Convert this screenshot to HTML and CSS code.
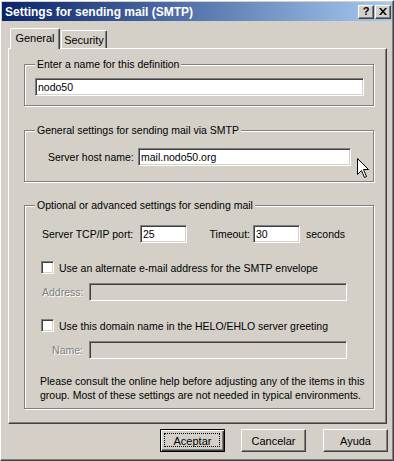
FILE: index.html
```html
<!DOCTYPE html>
<html lang="en">
<head>
  <meta charset="UTF-8" />
  <title>Settings for sending mail (SMTP)</title>
  <link rel="stylesheet" href="styles.css">
</head>
<body>
  <div class="window">
    <div class="titlebar">
      <span class="title">Settings for sending mail (SMTP)</span>
      <div class="title-buttons">
        <span class="tbtn help">?</span>
        <span class="tbtn close">
          <svg width="8" height="7" viewBox="0 0 8 7"><path d="M0 0h2l2 2.5L6 0h2L5 3.5 8 7H6L4 4.5 2 7H0l3-3.5z" fill="#000"/></svg>
        </span>
      </div>
    </div>

    <div class="tabs">
      <div class="tab active">General</div>
      <div class="tab">Security</div>
    </div>

    <div class="panel">
      <div class="group g1">
        <span class="group-title">Enter a name for this definition</span>
        <input class="edit full" type="text" value="nodo50">
      </div>

      <div class="group g2">
        <span class="group-title">General settings for sending mail via SMTP</span>
        <div class="row">
          <span class="host-label">Server host name:</span>
          <input class="edit host" type="text" value="mail.nodo50.org">
        </div>
      </div>

      <div class="group g3">
        <span class="group-title">Optional or advanced settings for sending mail</span>
        <div class="row port-row">
          <span class="port-label">Server TCP/IP port:</span>
          <input class="edit small" type="text" value="25">
          <span class="timeout-label">Timeout:</span>
          <input class="edit small" type="text" value="30">
          <span class="unit">seconds</span>
        </div>
        <div class="check-row">
          <span class="checkbox"></span>
          <span>Use an alternate e-mail address for the SMTP envelope</span>
        </div>
        <div class="row sub-row">
          <span class="sub-label disabled">Address:</span>
          <span class="edit off"></span>
        </div>
        <div class="check-row">
          <span class="checkbox"></span>
          <span>Use this domain name in the HELO/EHLO server greeting</span>
        </div>
        <div class="row sub-row">
          <span class="sub-label disabled">Name:</span>
          <span class="edit off"></span>
        </div>
        <p class="note">Please consult the online help before adjusting any of the items in this group. Most of these settings are not needed in typical environments.</p>
      </div>
    </div>

    <div class="buttons">
      <span class="btn default">Aceptar</span>
      <span class="btn cancel">Cancelar</span>
      <span class="btn help-btn">Ayuda</span>
    </div>

    <svg class="cursor" width="12" height="20" viewBox="0 0 12 20">
      <path d="M0.5 0.5V16.5L4.5 12.5L7.5 19.5L9.5 18.5L6.5 11.5H11.5Z" fill="#fff" stroke="#000" stroke-width="1"/>
    </svg>
  </div>
</body>
</html>
```

FILE: styles.css
```css
body {
  margin: 0;
  background: #d4d0c8;
  font-family: "Liberation Sans", Arial, sans-serif;
  font-size: 10.5px;
  color: #000;
}
.window {
  position: relative;
  width: 394px;
  height: 461px;
  box-sizing: border-box;
  background: #d4d0c8;
  border: 1px solid;
  border-color: #fff #404040 #404040 #fff;
  box-shadow: inset -1px -1px 0 #808080;
  padding: 1px;
  display: flex;
  flex-direction: column;
}
.titlebar {
  height: 19px;
  flex: none;
  display: flex;
  align-items: center;
  justify-content: space-between;
  padding: 0 1px 0 3px;
  background: linear-gradient(to right, #0a246a, #a6caf0);
}
.title {
  color: #fff;
  font-weight: bold;
  font-size: 12px;
}
.title-buttons {
  display: flex;
  gap: 1px;
}
.tbtn {
  width: 16px;
  height: 14px;
  box-sizing: border-box;
  background: #d4d0c8;
  border: 1px solid;
  border-color: #fff #404040 #404040 #fff;
  box-shadow: inset -1px -1px 0 #808080;
  display: flex;
  align-items: center;
  justify-content: center;
  font-weight: bold;
  font-size: 11px;
  line-height: 1;
}
.tabs {
  display: flex;
  align-items: flex-end;
  height: 20px;
  margin: 7px 0 0 8px;
  flex: none;
}
.tab {
  height: 18px;
  box-sizing: border-box;
  border-top: 1px solid #fff;
  border-left: 1px solid #fff;
  border-right: 1px solid #404040;
  border-radius: 2px 2px 0 0;
  box-shadow: inset -1px 0 0 #808080;
  display: flex;
  align-items: center;
  justify-content: center;
  width: 46px;
  margin-left: 1px;
  font-size: 11px;
}
.tab.active {
  position: relative;
  z-index: 1;
  width: 50px;
  height: 21px;
  margin: 0 0 -1px 0;
  background: #d4d0c8;
  padding-bottom: 2px;
}
.panel {
  height: 376px;
  box-sizing: border-box;
  margin: 0 5px 0 6px;
  border: 1px solid;
  border-color: #fff #404040 #404040 #fff;
  box-shadow: inset -1px -1px 0 #808080;
  padding: 15px 12px 0 15px;
  flex: none;
}
.group {
  position: relative;
  border: 1px solid #808080;
  box-shadow: 1px 1px 0 #fff, inset 1px 1px 0 #fff;
}
.group-title {
  position: absolute;
  top: -8px;
  left: 10px;
  padding: 0 2px;
  background: #d4d0c8;
  line-height: 14px;
}
.g1 {
  height: 42px;
  box-sizing: border-box;
  padding: 13px 9px 0 10px;
}
.g2 {
  height: 52px;
  box-sizing: border-box;
  margin-top: 24px;
  padding: 17px 0 0 23px;
}
.g3 {
  height: 204px;
  box-sizing: border-box;
  margin-top: 23px;
  padding: 19px 8px 0 15px;
}
.edit {
  display: block;
  height: 18px;
  box-sizing: border-box;
  background: #fff;
  border: 1px solid;
  border-color: #808080 #fff #fff #808080;
  box-shadow: inset 1px 1px 0 #404040, inset -1px -1px 0 #d4d0c8;
  padding: 0 0 0 2px;
  font: inherit;
  color: #000;
  outline: none;
  margin: 0;
}
.full {
  width: 100%;
}
.row {
  display: flex;
  align-items: center;
  height: 18px;
}
.host-label {
  width: 90px;
}
.host {
  width: 213px;
}
.port-label {
  width: 98px;
  margin-left: 2px;
}
.small {
  width: 47px;
}
.timeout-label {
  width: 66px;
  text-align: right;
  padding-right: 3px;
  box-sizing: border-box;
}
.unit {
  margin-left: 6px;
}
.check-row {
  display: flex;
  align-items: center;
  height: 13px;
  margin: 18px 0 0 1px;
}
.checkbox {
  width: 13px;
  height: 13px;
  box-sizing: border-box;
  background: #fff;
  border: 1px solid;
  border-color: #808080 #fff #fff #808080;
  box-shadow: inset 1px 1px 0 #404040, inset -1px -1px 0 #d4d0c8;
  margin-right: 5px;
  flex: none;
}
.sub-row {
  margin: 8px 0 0 2px;
}
.sub-row + .check-row {
  margin-top: 18px;
}
.check-row + .sub-row {
  margin-top: 9px;
}
.sub-label {
  width: 41px;
  text-align: right;
  margin-right: 6px;
}
.disabled {
  color: #808080;
  text-shadow: 1px 1px 0 #fff;
}
.off {
  width: 258px;
  background: #d4d0c8;
}
.note {
  margin: 15px 0 0 0;
  line-height: 14px;
}
.buttons {
  display: flex;
  justify-content: flex-end;
  margin: 5px 4px 0 0;
}
.btn {
  position: relative;
  width: 65px;
  height: 23px;
  box-sizing: border-box;
  display: flex;
  align-items: center;
  justify-content: center;
  border: 1px solid;
  border-color: #fff #404040 #404040 #fff;
  box-shadow: inset -1px -1px 0 #808080;
  font-size: 11px;
}
.btn.default {
  border-color: #000;
  box-shadow: inset 1px 1px 0 #fff, inset -1px -1px 0 #404040, inset -2px -2px 0 #808080;
}
.btn.default::after {
  content: "";
  position: absolute;
  left: 3px;
  top: 3px;
  right: 4px;
  bottom: 4px;
  border: 1px dotted #000;
}
.btn.cancel {
  margin-left: 16px;
}
.btn.help-btn {
  margin-left: 17px;
}
.cursor {
  position: absolute;
  left: 356px;
  top: 157px;
}
```
